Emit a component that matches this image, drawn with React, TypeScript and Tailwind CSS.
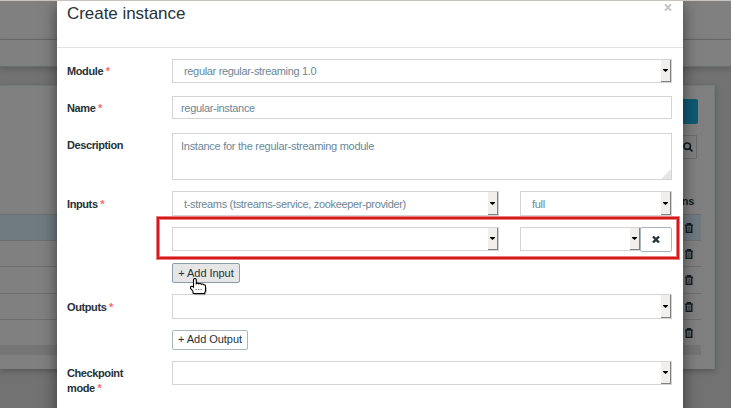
import React from "react";

const Label = ({ children, req = true, className = "" }: { children: React.ReactNode; req?: boolean; className?: string }) => (
  <label className={`w-[105px] shrink-0 text-[11px] leading-[15px] font-bold tracking-[-0.4px] text-[#263238] ${className}`}>
    {children}
    {req && <span className="text-[#f86c6b]"> *</span>}
  </label>
);

const Select = ({ value = "", className = "" }: { value?: string; className?: string }) => (
  <div className={`flex border border-[#d4d4d4] bg-white ${className}`}>
    <span className="flex flex-1 items-center pl-[11px] text-[11px] leading-3 tracking-[-0.33px] text-[#6b8797]">{value}</span>
    <span className="flex w-[10px] items-center justify-center border-r border-b border-[#808080] bg-[#f0efee]">
      <svg width="5" height="3" viewBox="0 0 5 3">
        <path d="M0 0h5v.8L2.500 3 0 .8z" fill="#000" />
      </svg>
    </span>
  </div>
);

const Trash = () => (
  <svg width="8" height="10" viewBox="0 0 8 10" fill="none" stroke="#131c20">
    <path d="M0 2.100h8M2.500 2V.7h3V2M1.200 2v7.200h5.600V2" strokeWidth="1.4" />
    <path d="M3.100 3.500v4.500M4.900 3.500v4.500" strokeWidth=".8" />
  </svg>
);

const rows = [
  "h-[26px] bg-[#6f7a81]",
  "h-[26px]",
  "h-[27px]",
  "h-[26px]",
  "h-[26px]",
];

const Page = () => (
  <div className="flex h-full flex-col bg-[#727272]">
    <div className="h-10 shrink-0 border-b border-[#6b6b6b] bg-[#808080]" />
    <div className="h-[27px] shrink-0 border-b border-[#67706f] bg-[#808080] shadow-[0_2px_6px_rgba(0,0,0,0.2)]" />
    <div className="mt-[18px] mr-4 flex h-[284px] flex-col border-t border-r border-[#747b7d] bg-[#808080] shadow-[0_2px_6px_rgba(0,0,0,0.25)]">
      <div className="mt-[13px] mr-4 h-[25px] w-20 shrink-0 self-end rounded-[2px] bg-[#0f5a74]" />
      <div className="mt-[11px] mr-[17px] flex h-6 w-20 shrink-0 items-center justify-end self-end border border-[#6d6d6d] pr-[3px]">
        <svg width="10" height="10" viewBox="0 0 10 10" fill="none" stroke="#131c20" strokeWidth="1.6">
          <circle cx="4.2" cy="4.2" r="3.2" />
          <path d="M6.600 6.600l2.800 2.800" />
        </svg>
      </div>
      <div className="mr-5 flex h-[55px] shrink-0 items-end justify-end pb-[5px] text-[11px] font-bold tracking-[-0.3px] text-[#131c20]">Actions</div>
      <div className="mr-[13px] flex flex-col">
        {rows.map((r, i) => (
          <div key={i} className={`flex items-center justify-end border-t border-[#6f6f6f] pr-2 ${r}`}>
            <Trash />
          </div>
        ))}
        <div className="h-[10px] bg-[#757575]" />
      </div>
    </div>
  </div>
);

export default function App() {
  return (
    <div className="relative h-[408px] w-[731px] overflow-hidden font-['Liberation_Sans',Arial,sans-serif]">
      <Page />
      <div className="absolute top-0 left-[57px] h-[440px] w-[626px] bg-white shadow-[0_5px_15px_rgba(0,0,0,0.5)]">
        <div className="flex h-12 justify-between border-b border-[#e0e2e4] pr-[11px] pl-[10px]">
          <h1 className="mt-1 text-[17px] leading-5 tracking-[-0.05px] text-[#263238]">Create instance</h1>
          <svg className="mt-1" width="8" height="7" viewBox="0 0 8 7" stroke="#c4c4c4" strokeWidth="2">
            <path d="M1 .3l6 6.400M7 .3l-6 6.400" />
          </svg>
        </div>
        <div className="flex flex-col pr-[11px] pl-[10px]">
          <div className="mt-[11px] flex h-6">
            <Label className="pt-[5px]">Module</Label>
            <Select className="w-[500px]" value="regular regular-streaming 1.0" />
          </div>
          <div className="mt-[13px] flex h-[23px]">
            <Label className="pt-[5px]">Name</Label>
            <div className="flex w-[500px] items-center border border-[#d4d4d4] pt-px pl-2 text-[11px] tracking-[-0.31px] text-[#6b8797]">regular-instance</div>
          </div>
          <div className="mt-[14px] flex h-[47px]">
            <Label req={false} className="pt-[5px]">Description</Label>
            <div className="flex w-[500px] justify-between border border-[#d4d4d4] pl-2 text-[11px] tracking-[-0.27px] text-[#6b8797]">
              <span className="pt-[5px] leading-[14px]">Instance for the regular-streaming module</span>
              <svg className="self-end" width="9" height="9" viewBox="0 0 9 9" shapeRendering="crispEdges">
                <path d="M9 0v9H0V7h2V5h2V3h2V1h2V0z" fill="#e6e6e6" />
              </svg>
            </div>
          </div>
          <div className="mt-[11px] flex h-[25px]">
            <Label className="pt-[6px]">Inputs</Label>
            <Select className="w-[327px]" value="t-streams (tstreams-service, zookeeper-provider)" />
            <Select className="ml-[21px] w-[152px]" value="full" />
          </div>
          <div className="mt-[11px] ml-[105px] flex h-[25px] items-start">
            <Select className="h-6 w-[327px]" />
            <Select className="ml-[21px] h-6 w-[121px]" />
            <div className="-ml-px flex h-[25px] w-8 items-center justify-center rounded-[2px] border border-[#aab7be] bg-white">
              <svg width="8" height="7" viewBox="0 0 8 7" stroke="#263238" strokeWidth="2.4">
                <path d="M1 .5l6 6M7 .5l-6 6" />
              </svg>
            </div>
          </div>
          <button className="mt-[11px] ml-[105px] h-5 w-[68px] rounded-[2px] border border-[#8d9ea8] bg-[#e6e6e6] text-[11px] leading-[18px] tracking-[-0.05px] text-[#263238]">+ Add Input</button>
          <div className="mt-[11px] flex h-[25px]">
            <Label className="pt-[6px]">Outputs</Label>
            <Select className="w-[500px]" />
          </div>
          <button className="mt-[11px] ml-[105px] h-5 w-[76px] rounded-[2px] border border-[#aab7be] bg-white pb-px text-[11px] leading-[17px] tracking-[-0.05px] text-[#263238]">+ Add Output</button>
          <div className="mt-[11px] flex h-6">
            <Label className="pt-[5px]">
              <span>Checkpoint</span>
              <br />
              <span>mode</span>
            </Label>
            <Select className="w-[500px]" />
          </div>
        </div>
      </div>
      <div className="absolute top-0 left-0 h-px w-full bg-[#c8c3be]" />
      <div className="absolute top-[217px] left-[157px] h-[42px] w-[522px] border-2 border-[#d41a1a] shadow-[0_0_0_1px_rgba(226,60,60,0.65),inset_0_0_0_1px_rgba(226,60,60,0.65)]" />
      <svg className="absolute top-[278px] left-[190px]" width="18" height="18" viewBox="0 0 18 18">
        <path d="M3.500 2c0-1 .6-1.500 1.400-1.500S6.300 1 6.300 2v3.600c.5-.7 2-.6 2.600.3.600-.6 2-.5 2.500.4.600-.6 1.900-.4 2.400.5.800-.2 1.700.4 1.700 1.300V13l-1 2.500H3.200L2.800 13 .6 10.500V8.800c.6-.8 2-.7 2.900.3z" fill="#fff" stroke="#000" strokeWidth="1.1" />
        <path d="M5.500 11.500h1.300M8 11.500h1.300M10.500 11.500h1.300" stroke="#777" />
        <path d="M4 16.700h10.800l1.500-3V9.500" fill="none" stroke="#000" strokeOpacity=".3" />
      </svg>
    </div>
  );
}
